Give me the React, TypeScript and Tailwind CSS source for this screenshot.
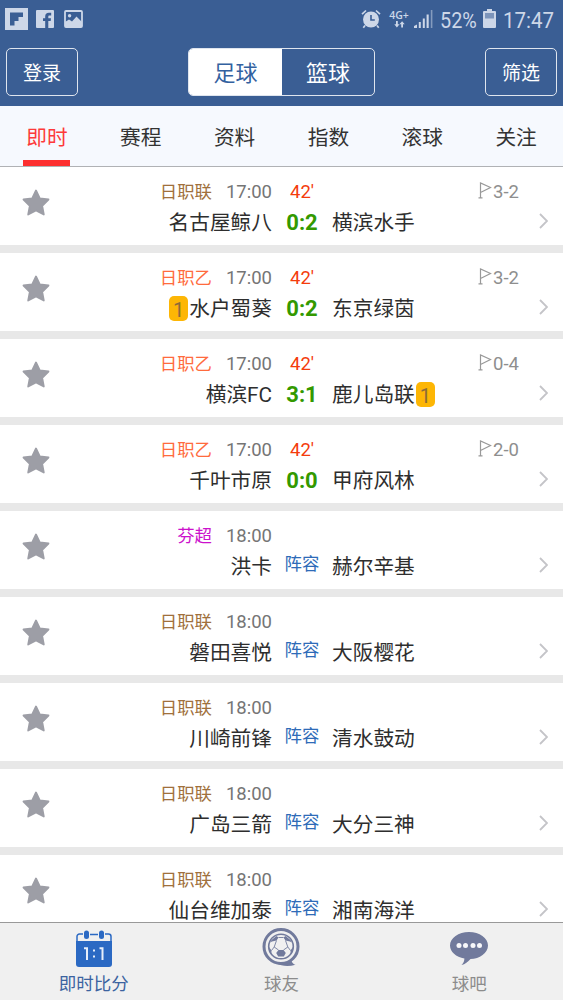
interface Match {
  league: string;
  leagueClass: string;
  time: string;
  minute?: string;
  home: string;
  away: string;
  score?: string;
  corners?: string;
  homeCards?: number;
  awayCards?: number;
}

const J1 = "text-[#a0703c]";
const J2 = "text-[#ff6b3d]";

const matches: Match[] = [
  { league: "日职联", leagueClass: J1, time: "17:00", minute: "42'", home: "名古屋鲸八", away: "横滨水手", score: "0:2", corners: "3-2" },
  { league: "日职乙", leagueClass: J2, time: "17:00", minute: "42'", home: "水户蜀葵", away: "东京绿茵", score: "0:2", corners: "3-2", homeCards: 1 },
  { league: "日职乙", leagueClass: J2, time: "17:00", minute: "42'", home: "横滨FC", away: "鹿儿岛联", score: "3:1", corners: "0-4", awayCards: 1 },
  { league: "日职乙", leagueClass: J2, time: "17:00", minute: "42'", home: "千叶市原", away: "甲府风林", score: "0:0", corners: "2-0" },
  { league: "芬超", leagueClass: "text-[#cc11cc]", time: "18:00", home: "洪卡", away: "赫尔辛基" },
  { league: "日职联", leagueClass: J1, time: "18:00", home: "磐田喜悦", away: "大阪樱花" },
  { league: "日职联", leagueClass: J1, time: "18:00", home: "川崎前锋", away: "清水鼓动" },
  { league: "日职联", leagueClass: J1, time: "18:00", home: "广岛三箭", away: "大分三神" },
  { league: "日职联", leagueClass: J1, time: "18:00", home: "仙台维加泰", away: "湘南海洋" },
];

const tabs = ["即时", "赛程", "资料", "指数", "滚球", "关注"];

function StatusBar() {
  return (
    <div className="flex h-[38px] items-center justify-between pr-[9px] pl-[5px] text-[#cdd7e8]">
      <div className="flex items-center gap-2">
        {/* Flipboard */}
        <svg width="23" height="22" viewBox="0 0 23 22">
          <rect width="23" height="22" fill="currentColor" />
          <path d="M5 4.500h13v4.500h-4.500v4h-4v4.500H5z" fill="#3a5e94" />
        </svg>
        {/* Facebook */}
        <svg width="18" height="18" viewBox="0 0 18 18">
          <rect width="18" height="18" rx="1" fill="currentColor" />
          <path d="M9.200 18v-7H7V8.200h2.200V6.400c0-2.400 1.300-3.700 3.600-3.700h2.400v2.800h-1.600c-1 0-1.300.4-1.300 1.300v1.400H15l-.3 2.800h-2.400v7z" fill="#3a5e94" />
        </svg>
        {/* Gallery */}
        <svg width="19" height="18" viewBox="0 0 19 18" className="ml-0.5">
          <rect x="1" y="1" width="17" height="16" rx="1" fill="none" stroke="currentColor" strokeWidth="1.800" />
          <circle cx="5.600" cy="5.800" r="1.700" fill="currentColor" />
          <path d="M1 12l4-2.500 3 2 4.500-5 5.500 5.500v5H1z" fill="currentColor" />
        </svg>
      </div>

      <div className="flex items-center">
        {/* Alarm */}
        <svg width="20" height="20" viewBox="0 0 20 20">
          <circle cx="10" cy="10.500" r="8" fill="currentColor" />
          <path d="M1 5.200L5 1.500M15 1.500l4 3.700M4 16.500l-1.700 2.200M16 16.500l1.700 2.200" stroke="currentColor" strokeWidth="1.700" />
          <path d="M10 6v5h3.800" fill="none" stroke="#3a5e94" strokeWidth="1.600" />
        </svg>
        <div className="ml-[8px] flex w-[20px] flex-col items-center">
          <span className="font-['Open_Sans'] text-[10.5px] leading-[11px] font-semibold">4G+</span>
          <svg width="11" height="7" viewBox="0 0 11 7" fill="currentColor">
            <path d="M2 0h1.800v3.200h1.700L2.900 6.500.3 3.200H2zM7.200 6.500V3.300H5.500L8.100.2l2.600 3.100H9v3.200z" />
          </svg>
        </div>
        {/* Signal */}
        <svg width="20" height="18" viewBox="0 0 20 18" className="ml-[5px]" fill="currentColor">
          <path d="M0 18v-2l3-1.500V18zM4.800 12h2v6h-2zM8.800 8.500h2V18h-2zM12.600 4.500h2.100V18h-2.100z" />
          <path d="M16.800 0h1.600v18h-1.600z" opacity="0.5" />
        </svg>
        <span className="mt-[3px] ml-[6px] w-[38px] text-[22.5px] leading-[35px]">
          <span className="inline-block origin-left scale-x-[0.88]">52%</span>
        </span>
        {/* Battery */}
        <svg width="13" height="20" viewBox="0 0 13 20" className="ml-[5px]">
          <path d="M4 0h5v2h3a1 1 0 0 1 1 1v15a1 1 0 0 1-1 1H1a1 1 0 0 1-1-1V3a1 1 0 0 1 1-1h3z" fill="currentColor" />
          <rect x="2" y="4" width="9" height="5.500" fill="#7d95bb" />
        </svg>
        <span className="mt-[3px] ml-[7px] w-[51px] text-[22.5px] leading-[35px]">
          <span className="inline-block origin-left scale-x-[0.91]">17:47</span>
        </span>
      </div>
    </div>
  );
}

function Star() {
  return (
    <svg width="28" height="27" viewBox="0 0 28 27" className="mt-[22px] ml-[22px] shrink-0">
      <path
        d="M14 1.500l3.800 7.900 8.700 1.100-6.300 6.300 1.600 8.700L14 21.500l-7.800 4L7.800 16.800 1.500 10.500l8.700-1.100z"
        fill="#9d9ea6"
        stroke="#9d9ea6"
        strokeWidth="1.800"
        strokeLinejoin="round"
      />
    </svg>
  );
}

function CardBadge({ count }: { count: number }) {
  return (
    <span className="flex h-[25px] w-[19px] items-center justify-center rounded-[5px] bg-[#fdb605] pt-[3px] text-[20px] text-[#8c6b3a]">
      {count}
    </span>
  );
}

function MatchRow({ match }: { match: Match }) {
  return (
    <div className="flex h-[86px] shrink-0 border-b-8 border-[#e8e8e8] bg-white">
      <Star />

      {/* Home side */}
      <div className="flex w-[222px] flex-col items-end pt-2">
        <div className="flex h-8 items-center text-[18.500px]">
          <span className={`pt-[3px] text-[17.400px] ${match.leagueClass}`}>{match.league}</span>
          <span className="ml-[14px] pt-[3px] text-[#757575]">{match.time}</span>
        </div>
        <div className="flex h-[30px] items-center gap-px text-[20.700px] text-[#2e2e2e]">
          {match.homeCards && <CardBadge count={match.homeCards} />}
          <span className="pt-[3px]">{match.home}</span>
        </div>
      </div>

      {/* Score */}
      <div className="flex w-[60px] flex-col items-center pt-2">
        <div className="flex h-8 items-center pt-[3px] text-[18.500px] text-[#f43c0c]">{match.minute}</div>
        <div className="flex h-[30px] items-center">
          {match.score ? (
            <span className="text-[22px] font-bold text-[#339900]">{match.score}</span>
          ) : (
            <span className="mb-[3px] text-[17.400px] text-[#2e6bb8]">阵容</span>
          )}
        </div>
      </div>

      {/* Away side */}
      <div className="flex flex-1 flex-col pt-2">
        <div className="flex h-8 items-center justify-end pr-[44px] text-[18.500px] text-[#8e8e8e]">
          {match.corners && (
            <>
              <svg width="14" height="17" viewBox="0 0 14 17" className="mr-px -mt-px" fill="none" stroke="#999" strokeWidth="1.200">
                <path d="M2.500 16V1l10 4.500-10 5M.5 15.800h4" />
              </svg>
              <span className="pt-[3px]">{match.corners}</span>
            </>
          )}
        </div>
        <div className="flex h-[30px] items-center gap-px text-[20.700px] text-[#2e2e2e]">
          <span className="pt-[3px]">{match.away}</span>
          {match.awayCards && <CardBadge count={match.awayCards} />}
          <svg width="9" height="16" viewBox="0 0 9 16" className="mr-[15px] mb-[2px] ml-auto" fill="none" stroke="#c4c4c8" strokeWidth="1.800">
            <path d="M1 1l7 7-7 7" />
          </svg>
        </div>
      </div>
    </div>
  );
}

function BottomNav() {
  return (
    <nav className="grid h-[78px] shrink-0 grid-cols-3 border-t border-[#999] bg-[#f0f0f0] text-[17.500px] leading-[24px] text-[#8c8c8c]">
      <div className="flex flex-col items-center pt-[7px] text-[#3c63a0]">
        <svg width="36" height="38" viewBox="0 0 36 38">
          <path d="M0 11h36v23a3 3 0 0 1-3 3H3a3 3 0 0 1-3-3z" fill="#2b69c3" />
          <path d="M1 12V6.500a2.500 2.500 0 0 1 2.500-2.500H7M14 4.500h8M29 4h3.500A2.500 2.500 0 0 1 35 6.500V12" fill="none" stroke="#2b69c3" strokeWidth="1.500" />
          <rect x="8" y="0.500" width="5" height="8.500" rx="2.500" fill="#2b69c3" />
          <rect x="23" y="0.500" width="5" height="8.500" rx="2.500" fill="#2b69c3" />
          <path d="M8 18.200h3V30M23.500 18.200h3V30" fill="none" stroke="#e6eefa" strokeWidth="2" />
          <path d="M17 19.500h2v2h-2zM17 25.500h2v2h-2z" fill="#e6eefa" />
        </svg>
        <span className="mt-[4px]">即时比分</span>
      </div>
      <div className="flex flex-col items-center pt-[4px]">
        <svg width="38" height="40" viewBox="0 0 38 40" className="-ml-[1px]">
          <path d="M29 31c0 3 2 6.500 4.500 6.700-7 2-14 1.500-19-1.500z" fill="#717a9c" />
          <circle cx="19" cy="19.500" r="17" fill="#f0f0f0" stroke="#717a9c" strokeWidth="3" />
          <circle cx="19" cy="19.500" r="12.300" fill="none" stroke="#717a9c" strokeWidth="1.600" />
          <path d="M16.500 23h5l2.300 3-2 3.500h-5.600l-2-3.500zM9.500 13l5-4 2 1.500-2 3-4.500 1-2 1zM28.500 13l-5-4-2 1.500 2 3 4.500 1 2 1zM7 20l2.500 3.500-.2 3-2-3zM31 20l-2.500 3.500.2 3 2-3z" fill="#717a9c" />
          <path d="M16.500 10.500h5M14.500 13.500L12.200 20l4.300 3M23.500 13.500l2.300 6.500-4.300 3M9.500 23.500l2.700-3.500M28.500 23.500L25.800 20" fill="none" stroke="#717a9c" strokeWidth="0.900" />
        </svg>
        <span className="mt-[5px]">球友</span>
      </div>
      <div className="flex flex-col items-center pt-[9px]">
        <svg width="38" height="34" viewBox="0 0 38 34">
          <path d="M19 0c10.500 0 19 6 19 13.500S29.500 27 20.500 27c-2.500 3-5.500 5.300-9 6 2-2 2.900-4.300 2.900-6.600C6 25 0 20 0 13.500 0 6 8.500 0 19 0z" fill="#717a9c" />
          <g fill="#f7f7fa">
            <circle cx="9" cy="13.500" r="2.500" />
            <circle cx="15.500" cy="13.500" r="2.500" />
            <circle cx="23" cy="13.500" r="2.500" />
            <circle cx="29.500" cy="13.500" r="2.500" />
          </g>
        </svg>
        <span className="mt-[6px]">球吧</span>
      </div>
    </nav>
  );
}

export default function App() {
  return (
    <div className="flex h-[1000px] w-[563px] flex-col overflow-hidden bg-white font-['Roboto','Noto_Sans_CJK_SC',sans-serif] whitespace-nowrap">
      <header className="h-[106px] shrink-0 bg-[#3a5e94]">
        <StatusBar />
        <div className="flex items-center justify-between px-[6px] pt-[10px] text-white">
          <button className="h-[48px] w-[72px] rounded-[5px] border border-[#dfe5ee] pt-[4px] text-[19px]">登录</button>
          <div className="flex h-[48px] w-[187px] overflow-hidden rounded-[5px] border border-[#dfe5ee] text-[22px]">
            <button className="w-[93px] bg-white pt-[2px] text-[#3361a0]">足球</button>
            <button className="flex-1 pt-[2px]">篮球</button>
          </div>
          <button className="h-[48px] w-[72px] rounded-[5px] border border-[#dfe5ee] pt-[4px] text-[19px]">筛选</button>
        </div>
      </header>

      <nav className="grid h-[61px] shrink-0 grid-cols-6 border-b border-[#b0b2b5] bg-[#f6f9fe] text-[20.700px] text-[#333]">
        {tabs.map((tab, i) => (
          <div key={tab} className={`flex flex-col items-center ${i === 0 ? "text-[#fd3a3a]" : ""}`}>
            <span className="flex h-[54px] items-center pt-[11px]">{tab}</span>
            {i === 0 && <span className="h-[6px] w-[47px] bg-[#fd2f2f]" />}
          </div>
        ))}
      </nav>

      <main className="flex min-h-0 flex-1 flex-col overflow-hidden">
        {matches.map((match) => (
          <MatchRow key={match.home} match={match} />
        ))}
      </main>

      <BottomNav />
    </div>
  );
}
